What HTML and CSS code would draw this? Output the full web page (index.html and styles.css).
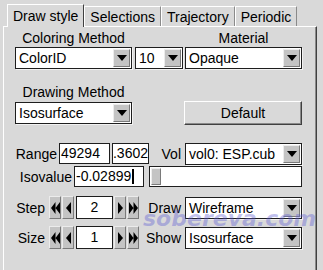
FILE: index.html
```html
<!DOCTYPE html>
<html lang="en">
<head>
    <meta charset="UTF-8">
    <title>Graphical Representations</title>
    <link rel="stylesheet" href="styles.css">
</head>
<body>

<div class="app">
    <div class="tabs">
        <div class="tab active">Draw style</div>
        <div class="tab">Selections</div>
        <div class="tab">Trajectory</div>
        <div class="tab">Periodic</div>
    </div>

    <div class="panel">
        <div class="row row-head">
            <span class="head head-color">Coloring Method</span>
            <span class="head head-material">Material</span>
        </div>

        <div class="row row-color">
            <div class="combo w-color"><span class="val">ColorID</span><span class="arrow"></span></div>
            <div class="combo w-id"><span class="val">10</span><span class="arrow"></span></div>
            <div class="combo w-right"><span class="val">Opaque</span><span class="arrow"></span></div>
        </div>

        <div class="row row-head2">
            <span class="head head-color">Drawing Method</span>
        </div>

        <div class="row row-method">
            <div class="combo w-method"><span class="val">Isosurface</span><span class="arrow"></span></div>
            <div class="btn">Default</div>
        </div>

        <div class="row row-range">
            <span class="lbl lbl-range">Range</span>
            <div class="entry w-min">49294</div>
            <div class="entry w-max clip"><span>26.3602</span></div>
            <div class="right">
                <span class="rlbl">Vol</span>
                <div class="combo w-right"><span class="val">vol0: ESP.cub</span><span class="arrow"></span></div>
            </div>
        </div>

        <div class="row row-iso">
            <span class="lbl lbl-iso">Isovalue</span>
            <div class="entry w-iso">-0.02899<span class="caret"></span></div>
            <div class="scale"><span class="thumb"></span></div>
        </div>

        <div class="row row-step">
            <span class="lbl lbl-step">Step</span>
            <div class="spin">
                <span class="sbtn"><svg width="9" height="12" viewBox="0 0 9 12"><path d="M4.5 0L0 6L4.5 12ZM9 0L4.5 6L9 12Z"/></svg></span>
                <span class="sbtn"><svg width="5" height="12" viewBox="0 0 5 12"><path d="M5 0L0 6L5 12Z"/></svg></span>
                <span class="snum">2</span>
                <span class="sbtn"><svg width="5" height="12" viewBox="0 0 5 12"><path d="M0 0L5 6L0 12Z"/></svg></span>
                <span class="sbtn"><svg width="9" height="12" viewBox="0 0 9 12"><path d="M0 0L4.5 6L0 12ZM4.5 0L9 6L4.5 12Z"/></svg></span>
            </div>
            <div class="right">
                <span class="rlbl">Draw</span>
                <div class="combo w-right"><span class="val">Wireframe</span><span class="arrow"></span></div>
            </div>
        </div>

        <div class="row row-size">
            <span class="lbl lbl-step">Size</span>
            <div class="spin">
                <span class="sbtn"><svg width="9" height="12" viewBox="0 0 9 12"><path d="M4.5 0L0 6L4.5 12ZM9 0L4.5 6L9 12Z"/></svg></span>
                <span class="sbtn"><svg width="5" height="12" viewBox="0 0 5 12"><path d="M5 0L0 6L5 12Z"/></svg></span>
                <span class="snum">1</span>
                <span class="sbtn"><svg width="5" height="12" viewBox="0 0 5 12"><path d="M0 0L5 6L0 12Z"/></svg></span>
                <span class="sbtn"><svg width="9" height="12" viewBox="0 0 9 12"><path d="M0 0L4.5 6L0 12ZM4.5 0L9 6L4.5 12Z"/></svg></span>
            </div>
            <div class="right">
                <span class="rlbl">Show</span>
                <div class="combo w-right"><span class="val">Isosurface</span><span class="arrow"></span></div>
            </div>
        </div>
    </div>

    <span class="watermark">sobereva.com</span>
</div>

</body>
</html>
```

FILE: styles.css
```css
body {
    margin: 0;
    background: #d9d9d9;
    font-family: "Liberation Sans", Arial, sans-serif;
    font-size: 14px;
    color: #000;
}
.app {
    position: relative;
    width: 323px;
    height: 270px;
    overflow: hidden;
}

/* tabs */
.tabs {
    display: flex;
    align-items: flex-end;
    height: 26px;
    padding-left: 7px;
}
.tab {
    height: 19px;
    line-height: 20px;
    padding: 0 5px;
    border-top: 1px solid #fff;
    border-left: 1px solid #fff;
    border-right: 1px solid #8a8a8a;
}
.tab.active {
    position: relative;
    z-index: 1;
    height: 22px;
    line-height: 23px;
    margin-bottom: -1px;
    background: #d9d9d9;
    border-right-color: #404040;
}

/* panel */
.panel {
    margin-left: 3px;
    width: 287px;
    height: 243px;
    padding: 3px 14px 0 11px;
    border-top: 1px solid #fff;
    border-left: 1px solid #fff;
    border-right: 1px solid #404040;
    box-shadow: inset -1px 0 0 #8a8a8a;
}
.row {
    display: flex;
    align-items: center;
}
.row-head { height: 16px; }
.row-color { height: 22px; margin-top: 1px; }
.row-head2 { height: 16px; margin-top: 15px; }
.row-method { height: 24px; margin-top: 1px; justify-content: space-between; }
.row-range { height: 21px; margin-top: 18px; }
.row-iso { height: 21px; margin-top: 2px; }
.row-step { height: 23px; margin-top: 9px; }
.row-size { height: 23px; margin-top: 7px; }

.head { text-align: center; }
.head-color { width: 117px; }
.head-material { width: 117px; margin-left: auto; }

.lbl { text-align: right; margin-right: 2px; }
.lbl-range { width: 42px; }
.lbl-iso { width: 57px; }
.lbl-step { width: 30px; margin-right: 4px; }

.right {
    display: flex;
    align-items: center;
    margin-left: auto;
}
.rlbl { margin-right: 4px; }

/* combobox */
.combo {
    display: flex;
    align-items: center;
    box-sizing: border-box;
    height: 22px;
    background: #fff;
    border: 1px solid #1e1e1e;
    box-shadow: 1px 1px 0 #f2f2f2;
}
.combo .val {
    flex: 1;
    padding-left: 3px;
    white-space: nowrap;
    overflow: hidden;
}
.combo .arrow {
    display: flex;
    align-items: center;
    justify-content: center;
    box-sizing: border-box;
    width: 17px;
    height: 18px;
    margin-right: 1px;
    background: #c4c4c4;
    border-top: 1px solid #ececec;
    border-left: 1px solid #ececec;
    border-right: 1px solid #7a7a7a;
    border-bottom: 1px solid #7a7a7a;
}
.combo .arrow::after {
    content: "";
    border-left: 5px solid transparent;
    border-right: 5px solid transparent;
    border-top: 6px solid #000;
}
.w-color { width: 117px; }
.w-id { width: 48px; margin-left: 3px; }
.w-right { width: 117px; margin-left: auto; }
.w-method { width: 117px; height: 22px; }

.btn {
    box-sizing: border-box;
    width: 118px;
    height: 24px;
    line-height: 22px;
    text-align: center;
    background: #d9d9d9;
    border: 1px solid;
    border-color: #fff #404040 #404040 #fff;
    box-shadow: inset -1px -1px 0 #8a8a8a;
}

/* entries */
.entry {
    box-sizing: border-box;
    height: 21px;
    line-height: 19px;
    padding: 0 1px;
    background: #fff;
    border: 1px solid #1e1e1e;
    white-space: nowrap;
    overflow: hidden;
}
.entry.clip {
    display: flex;
    justify-content: flex-end;
    padding: 0;
}
.w-min { width: 51px; }
.w-max { width: 37px; margin-left: 2px; }
.w-iso { width: 70px; }
.caret {
    display: inline-block;
    width: 2px;
    height: 15px;
    margin-left: 1px;
    vertical-align: -3px;
    background: #000;
}

.scale {
    box-sizing: border-box;
    width: 153px;
    height: 21px;
    margin-left: auto;
    padding: 1px;
    background: #fff;
    border: 1px solid #1e1e1e;
}
.thumb {
    display: block;
    box-sizing: border-box;
    width: 10px;
    height: 17px;
    background: #c4c4c4;
    border-top: 1px solid #ececec;
    border-left: 1px solid #ececec;
    border-right: 1px solid #7a7a7a;
    border-bottom: 1px solid #7a7a7a;
}

/* spinner */
.spin {
    display: flex;
    align-items: center;
    height: 23px;
}
.sbtn {
    display: flex;
    align-items: center;
    justify-content: center;
    box-sizing: border-box;
    width: 12px;
    height: 23px;
    margin-right: 1px;
    background: #c4c4c4;
    border-top: 1px solid #ececec;
    border-left: 1px solid #ececec;
    border-right: 1px solid #7a7a7a;
    border-bottom: 1px solid #7a7a7a;
}
.snum {
    box-sizing: border-box;
    width: 37px;
    height: 23px;
    line-height: 21px;
    margin: 0 1px;
    text-align: center;
    background: #fff;
    border: 1px solid #1e1e1e;
}

.watermark {
    position: absolute;
    left: 143px;
    top: 208px;
    font-family: "DejaVu Sans", sans-serif;
    font-size: 22px;
    line-height: 22px;
    font-weight: bold;
    font-style: italic;
    color: rgba(90, 90, 210, 0.38);
    pointer-events: none;
}
```
